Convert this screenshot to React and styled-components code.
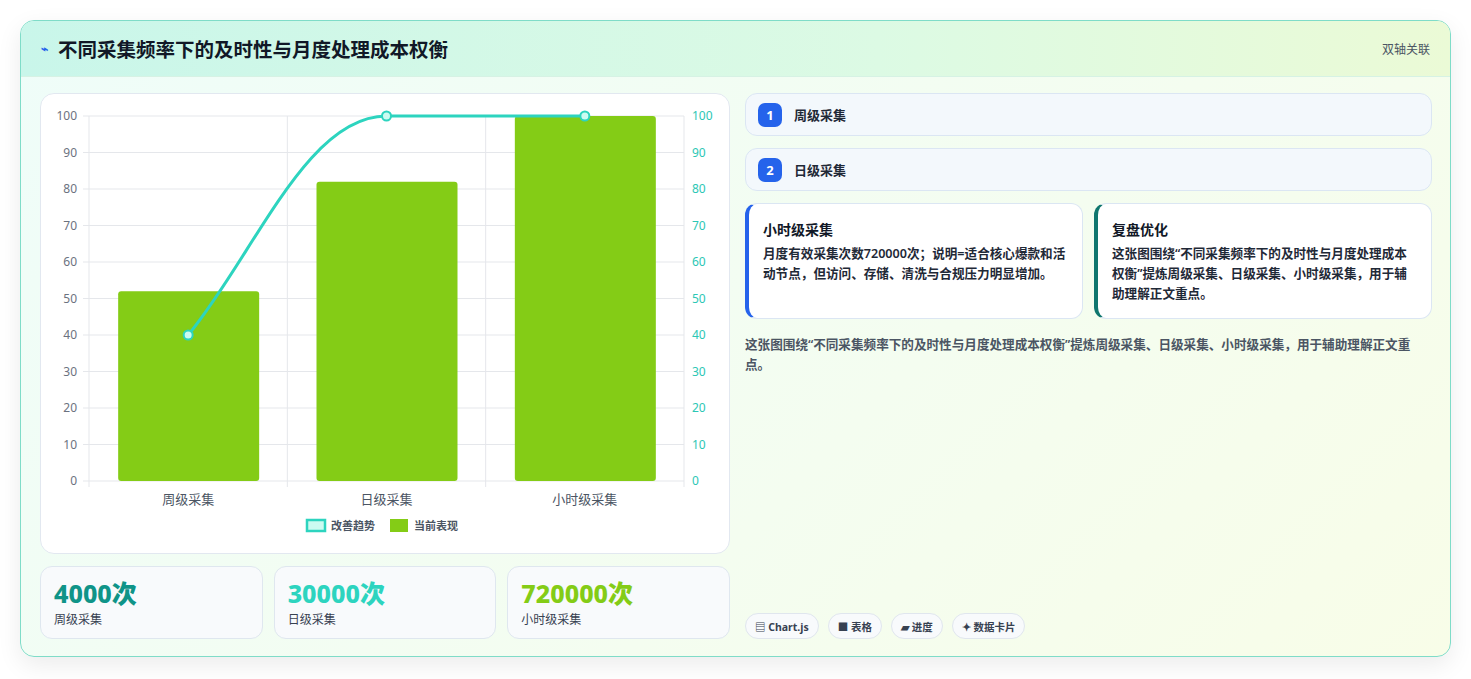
import React from 'react';
import styled, { createGlobalStyle } from 'styled-components';

const Global = createGlobalStyle`
  body { margin: 0; background: #fff; font-family: "Noto Sans", "Noto Sans CJK SC", sans-serif; }
`;

const Page = styled.div`
  padding: 20px 20px 22px 20px;
  height: 679px;
  box-sizing: border-box;
`;

const Frame = styled.div`
  height: 637px;
  box-sizing: border-box;
  border: 1px solid #7fdcc8;
  border-radius: 14px;
  background: linear-gradient(135deg, #effdf9 0%, #f4fdf0 60%, #f8fde8 100%);
  box-shadow: 0 8px 24px rgba(0,0,0,0.08);
  display: flex;
  flex-direction: column;
  overflow: hidden;
`;

const Header = styled.div`
  height: 55px;
  flex: none;
  display: flex;
  align-items: center;
  justify-content: space-between;
  padding: 0 20px;
  background: linear-gradient(90deg, #c9f6ea 0%, #dcfae4 60%, #ebfad6 100%);
  border-bottom: 1px solid #d6f2e4;
`;

const Title = styled.h1`
  margin: 0;
  font-size: 19.5px;
  font-weight: 700;
  color: #111827;
  display: flex;
  align-items: center;
  gap: 10px;
`;

const Tag = styled.span`
  font-size: 12px;
  color: #4b5563;
`;

const Body = styled.div`
  flex: 1;
  display: grid;
  grid-template-columns: 1fr 1fr;
  gap: 15px;
  padding: 16px 18px 18px 19px;
`;

const Col = styled.div`
  display: flex;
  flex-direction: column;
  gap: 12px;
  min-height: 0;
`;

const ChartCard = styled.div`
  height: 461px;
  box-sizing: border-box;
  background: #fff;
  border: 1px solid #e2e8f0;
  border-radius: 14px;
`;

const Stats = styled.div`
  display: grid;
  grid-template-columns: repeat(3, 1fr);
  gap: 11px;
`;

const Stat = styled.div`
  height: 73px;
  box-sizing: border-box;
  background: #f8fafc;
  border: 1px solid #dfe7ef;
  border-radius: 12px;
  padding: 9px 13px;
`;

const StatValue = styled.div`
  font-size: 25px;
  font-weight: 800;
  color: ${p => p.c};
  line-height: 34px;
`;

const StatLabel = styled.div`
  font-size: 12px;
  color: #374151;
`;

const Step = styled.div`
  height: 43px;
  box-sizing: border-box;
  border: 1px solid #dbe6f3;
  border-radius: 12px;
  background: #f3f8fc;
  display: flex;
  align-items: center;
  gap: 12px;
  padding: 0 12px;
  font-size: 13px;
  font-weight: 600;
  color: #1f2937;
`;

const Num = styled.span`
  width: 24px;
  height: 24px;
  border-radius: 7px;
  background: #2563eb;
  color: #fff;
  font-size: 13px;
  font-weight: 700;
  display: flex;
  align-items: center;
  justify-content: center;
`;

const Cards = styled.div`
  display: grid;
  grid-template-columns: 1fr 1fr;
  gap: 11px;
`;

const Card = styled.div`
  height: 116px;
  box-sizing: border-box;
  background: #fff;
  border: 1px solid #dbe6f3;
  border-left: 4px solid ${p => p.c};
  border-radius: 12px;
  padding: 15px 14px 0 14px;
`;

const CardTitle = styled.div`
  font-size: 14px;
  font-weight: 700;
  color: #111827;
  margin-bottom: 5px;
`;

const CardText = styled.div`
  font-size: 12.6px;
  font-weight: 600;
  line-height: 20px;
  color: #1f2937;
`;

const Note = styled.p`
  margin: 4px 0 0;
  font-size: 12.6px;
  font-weight: 600;
  line-height: 20px;
  color: #4b5563;
`;

const Chips = styled.div`
  margin-top: auto;
  display: flex;
  gap: 9px;
`;

const Chip = styled.span`
  height: 26px;
  box-sizing: border-box;
  padding: 0 9px;
  border: 1px solid #e0e6ee;
  border-radius: 13px;
  background: #f8fafc;
  font-size: 10.5px;
  font-weight: 700;
  color: #374151;
  display: flex;
  align-items: center;
`;

const L = 48, R = 643, T = 22, B = 387;
const yv = v => B - v * (B - T) / 100;
const cats = [['周级采集', 52, 40], ['日级采集', 82, 100], ['小时级采集', 100, 100]];
const cw = (R - L) / 3;
const cx = i => L + cw * i + cw / 2;

function Chart() {
  const ticks = [0, 10, 20, 30, 40, 50, 60, 70, 80, 90, 100];
  const p = cats.map((c, i) => [cx(i), yv(c[2])]);
  const line = `M${p[0][0]},${p[0][1]} C${p[0][0] + 66},${p[0][1] - 80} ${p[1][0] - 80},${p[1][1]} ${p[1][0]},${p[1][1]} L${p[2][0]},${p[2][1]}`;
  return (
    <svg width="688" height="461" style={{ display: 'block' }}>
      {ticks.map(t => (
        <g key={t}>
          <line x1={L - 6} x2={R} y1={yv(t)} y2={yv(t)} stroke="#e5e7eb" />
          <text x={L - 12} y={yv(t) + 4} fontSize="12" fill="#6b7280" textAnchor="end">{t}</text>
          <text x={R + 8} y={yv(t) + 4} fontSize="12" fill="#2cc7b5">{t}</text>
        </g>
      ))}
      {[0, 1, 2, 3].map(i => (
        <line key={i} x1={L + cw * i} x2={L + cw * i} y1={T} y2={B + 6} stroke="#e5e7eb" />
      ))}
      {cats.map((c, i) => (
        <g key={c[0]}>
          <rect x={cx(i) - 70} y={yv(c[1])} width="141" height={B - yv(c[1])} rx="3" fill="#84cc16" />
          <text x={cx(i)} y={B + 23} fontSize="13" fill="#4b5563" textAnchor="middle">{c[0]}</text>
        </g>
      ))}
      <path d={line} fill="none" stroke="#2dd4bf" strokeWidth="3" />
      {p.map((q, i) => <circle key={i} cx={q[0]} cy={q[1]} r="4.5" fill="#ccfbf1" stroke="#2dd4bf" strokeWidth="2" />)}
      <rect x="266" y="426" width="18" height="11" fill="#ccfbf1" stroke="#2dd4bf" strokeWidth="2.5" />
      <text x="290" y="436" fontSize="11" fill="#4b5563" fontWeight="600">改善趋势</text>
      <rect x="349" y="425" width="18" height="13" fill="#84cc16" />
      <text x="373" y="436" fontSize="11" fill="#4b5563" fontWeight="600">当前表现</text>
    </svg>
  );
}

export default function App() {
  return (
    <Page>
      <Global />
      <Frame>
        <Header>
          <Title><span style={{ color: '#2563eb', fontSize: 12 }}>⌁</span>不同采集频率下的及时性与月度处理成本权衡</Title>
          <Tag>双轴关联</Tag>
        </Header>
        <Body>
          <Col>
            <ChartCard><Chart /></ChartCard>
            <Stats>
              <Stat><StatValue c="#0f9488">4000次</StatValue><StatLabel>周级采集</StatLabel></Stat>
              <Stat><StatValue c="#2dd4bf">30000次</StatValue><StatLabel>日级采集</StatLabel></Stat>
              <Stat><StatValue c="#84cc16">720000次</StatValue><StatLabel>小时级采集</StatLabel></Stat>
            </Stats>
          </Col>
          <Col>
            <Step><Num>1</Num>周级采集</Step>
            <Step><Num>2</Num>日级采集</Step>
            <Cards>
              <Card c="#2563eb">
                <CardTitle>小时级采集</CardTitle>
                <CardText>月度有效采集次数720000次；说明=适合核心爆款和活动节点，但访问、存储、清洗与合规压力明显增加。</CardText>
              </Card>
              <Card c="#0f766e">
                <CardTitle>复盘优化</CardTitle>
                <CardText>这张图围绕“不同采集频率下的及时性与月度处理成本权衡”提炼周级采集、日级采集、小时级采集，用于辅助理解正文重点。</CardText>
              </Card>
            </Cards>
            <Note>这张图围绕“不同采集频率下的及时性与月度处理成本权衡”提炼周级采集、日级采集、小时级采集，用于辅助理解正文重点。</Note>
            <Chips>
              <Chip>▤ Chart.js</Chip>
              <Chip>■ 表格</Chip>
              <Chip>▰ 进度</Chip>
              <Chip>✦ 数据卡片</Chip>
            </Chips>
          </Col>
        </Body>
      </Frame>
    </Page>
  );
}
